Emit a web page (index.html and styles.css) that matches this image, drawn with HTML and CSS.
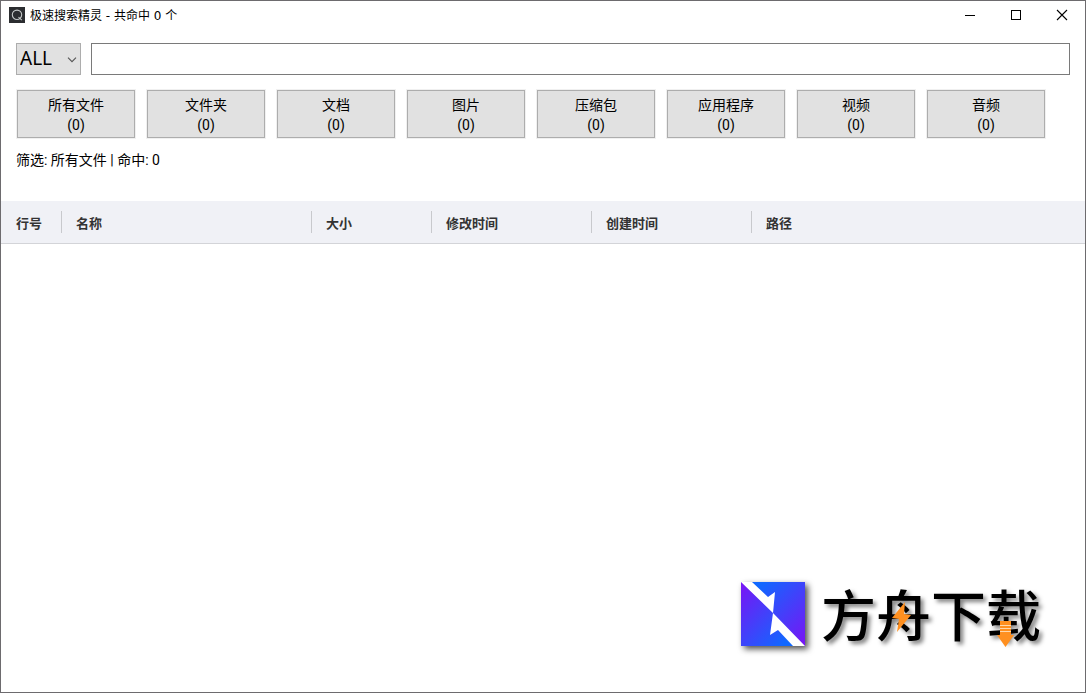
FILE: index.html
```html
<!DOCTYPE html>
<html lang="zh">
<head>
    <meta charset="UTF-8">
    <meta name="viewport" content="width=device-width, initial-scale=1.0">
    <title>极速搜索精灵</title>
    <link rel="stylesheet" href="styles.css">
</head>
<body>
    <div class="window">
        <header class="title-bar">
            <svg class="app-icon" width="16" height="16" viewBox="0 0 16 16" aria-hidden="true">
                <rect width="16" height="16" fill="#2b2d30"/>
                <circle cx="8" cy="7.8" r="4.7" fill="none" stroke="#c4c8c8" stroke-width="1.1"/>
                <path d="M9.5 10.2L12.8 13.2" stroke="#c4c8c8" stroke-width="1.1"/>
            </svg>
            <h1>极速搜索精灵 - 共命中 0 个</h1>
            <div class="window-controls">
                <button type="button" aria-label="最小化">
                    <svg width="12" height="12" viewBox="0 0 12 12"><path d="M1 6.5H11" stroke="#000"/></svg>
                </button>
                <button type="button" aria-label="最大化">
                    <svg width="12" height="12" viewBox="0 0 12 12"><rect x="1.5" y="1.5" width="9" height="9" fill="none" stroke="#000"/></svg>
                </button>
                <button type="button" aria-label="关闭">
                    <svg width="12" height="12" viewBox="0 0 12 12"><path d="M1 1L11 11M11 1L1 11" stroke="#000" stroke-width="1.1"/></svg>
                </button>
            </div>
        </header>

        <form class="search-row">
            <div class="drive">
                <select id="drive" aria-label="磁盘">
                    <option>ALL</option>
                </select>
                <svg width="10" height="6" viewBox="0 0 10 6" aria-hidden="true"><path d="M1 0.7L5 4.7L9 0.7" fill="none" stroke="#555" stroke-width="1.1"/></svg>
            </div>
            <input type="text" id="keyword" aria-label="搜索">
        </form>

        <div class="filters">
            <button type="button">所有文件<br>(0)</button>
            <button type="button">文件夹<br>(0)</button>
            <button type="button">文档<br>(0)</button>
            <button type="button">图片<br>(0)</button>
            <button type="button">压缩包<br>(0)</button>
            <button type="button">应用程序<br>(0)</button>
            <button type="button">视频<br>(0)</button>
            <button type="button">音频<br>(0)</button>
        </div>

        <p class="status">筛选: 所有文件 | 命中: 0</p>

        <table class="results">
            <thead>
                <tr>
                    <th class="col-no"><span>行号</span></th>
                    <th class="col-name"><span>名称</span></th>
                    <th class="col-size"><span>大小</span></th>
                    <th class="col-time"><span>修改时间</span></th>
                    <th class="col-time"><span>创建时间</span></th>
                    <th><span>路径</span></th>
                </tr>
            </thead>
            <tbody></tbody>
        </table>

        <div class="watermark">
            <svg class="mark" width="64" height="64" viewBox="0 0 64 64" aria-hidden="true">
                <defs>
                    <linearGradient id="upper" x1="0.2" y1="0" x2="1" y2="0.9">
                        <stop offset="0" stop-color="#1068ff"/>
                        <stop offset="1" stop-color="#7518f5"/>
                    </linearGradient>
                    <linearGradient id="lower" x1="0" y1="0.1" x2="0.8" y2="1">
                        <stop offset="0" stop-color="#7518f5"/>
                        <stop offset="1" stop-color="#1068ff"/>
                    </linearGradient>
                </defs>
                <rect width="64" height="64" fill="#fff"/>
                <path d="M11 0H64V64L32 31L34 10L27 15Z" fill="url(#upper)"/>
                <path d="M0 0L32 31L29 53L37 48L52 64H0Z" fill="url(#lower)"/>
            </svg>
            <div class="wordmark">
                <span>方舟下载</span>
                <svg width="220" height="64" viewBox="0 0 220 64" aria-hidden="true">
                    <path d="M84 20L71 36L78 37L76 50L90 33L83 32Z" fill="#ff9020"/>
                    <path d="M179 39H190V53H179Z" fill="#ffd9ae"/>
                    <path d="M179 39H190V43H179ZM179 44H190V46H179ZM179 47H190V49H179ZM179 50H190V53H193L184.500 65L176 53H179Z" fill="#ff9020"/>
                </svg>
            </div>
        </div>
    </div>
</body>
</html>
```
FILE: styles.css
```css
* {
    box-sizing: border-box;
}
body {
    margin: 0;
    background-color: #fff;
    color: #000;
    font-family: Roboto, "Noto Sans CJK SC", sans-serif;
    font-size: 14px;
}
button, input, select {
    font-family: inherit;
    color: inherit;
    border-radius: 0;
    margin: 0;
}
.window {
    position: relative;
    min-height: 100vh;
    border: 1px solid #6d6b6e;
}
.title-bar {
    display: flex;
    align-items: center;
    height: 28px;
    padding-left: 8px;
}
.title-bar h1 {
    flex: 1;
    margin: 0 0 0 5px;
    padding-bottom: 2px;
    font-family: "DejaVu Sans", "Noto Sans CJK SC", sans-serif;
    font-size: 12px;
    font-weight: normal;
}
.window-controls {
    display: flex;
}
.window-controls button {
    display: flex;
    align-items: center;
    justify-content: center;
    width: 46px;
    height: 28px;
    padding: 0;
    border: none;
    background: none;
}
.search-row {
    display: flex;
    gap: 10px;
    padding: 14px 15px 0;
}
.drive {
    position: relative;
    width: 65px;
}
.drive select {
    appearance: none;
    width: 100%;
    height: 32px;
    padding: 0 0 2px 3px;
    border: 1px solid #adadad;
    background-color: #e1e1e1;
    font-family: "Noto Sans", sans-serif;
    font-size: 19px;
}
.drive svg {
    position: absolute;
    top: 14px;
    right: 4px;
    pointer-events: none;
}
.search-row input {
    flex: 1;
    min-width: 0;
    height: 32px;
    padding: 0 6px;
    border: 1px solid #7a7a7a;
    background-color: #fff;
    font-size: 19px;
    outline: none;
}
.filters {
    display: flex;
    flex-wrap: wrap;
    gap: 12px;
    padding: 15px 16px 0;
}
.filters button {
    width: 118px;
    height: 48px;
    padding: 2px 0 0;
    border: 1px solid #adadad;
    background-color: #e1e1e1;
    box-shadow: 0 0 0 1px #f0f0f0;
    font-size: 14px;
    line-height: 20px;
}
.status {
    margin: 12px 15px 31px;
    line-height: 20px;
}
.results {
    width: 100%;
    border-collapse: collapse;
    table-layout: fixed;
}
.results th {
    padding: 10px 0;
    background-color: #f0f1f6;
    border-bottom: 1px solid #d3d4d8;
    color: #333;
    font-size: 13px;
    text-align: left;
}
.results th span {
    display: block;
    height: 22px;
    padding-left: 14px;
    border-left: 1px solid #c8c9cd;
    line-height: 26px;
}
.results th:first-child span {
    border-left-color: transparent;
}
.col-no {
    width: 60px;
}
.col-name {
    width: 250px;
}
.col-size {
    width: 120px;
}
.col-time {
    width: 160px;
}
/* logo floating over the result list */
.watermark {
    position: absolute;
    right: 44px;
    bottom: 46px;
    display: flex;
    gap: 16px;
}
.mark {
    filter: drop-shadow(3px 3px 3px rgba(0, 0, 0, 0.7));
}
.wordmark {
    position: relative;
    width: 220px;
    height: 64px;
    font-family: "Noto Sans CJK SC", sans-serif;
    font-size: 55px;
    font-weight: 500;
    line-height: 60px;
    white-space: nowrap;
    text-shadow: 3px 3px 4px rgba(0, 0, 0, 0.5);
}
.wordmark svg {
    position: absolute;
    top: 0;
    left: 0;
    overflow: visible;
}
```
